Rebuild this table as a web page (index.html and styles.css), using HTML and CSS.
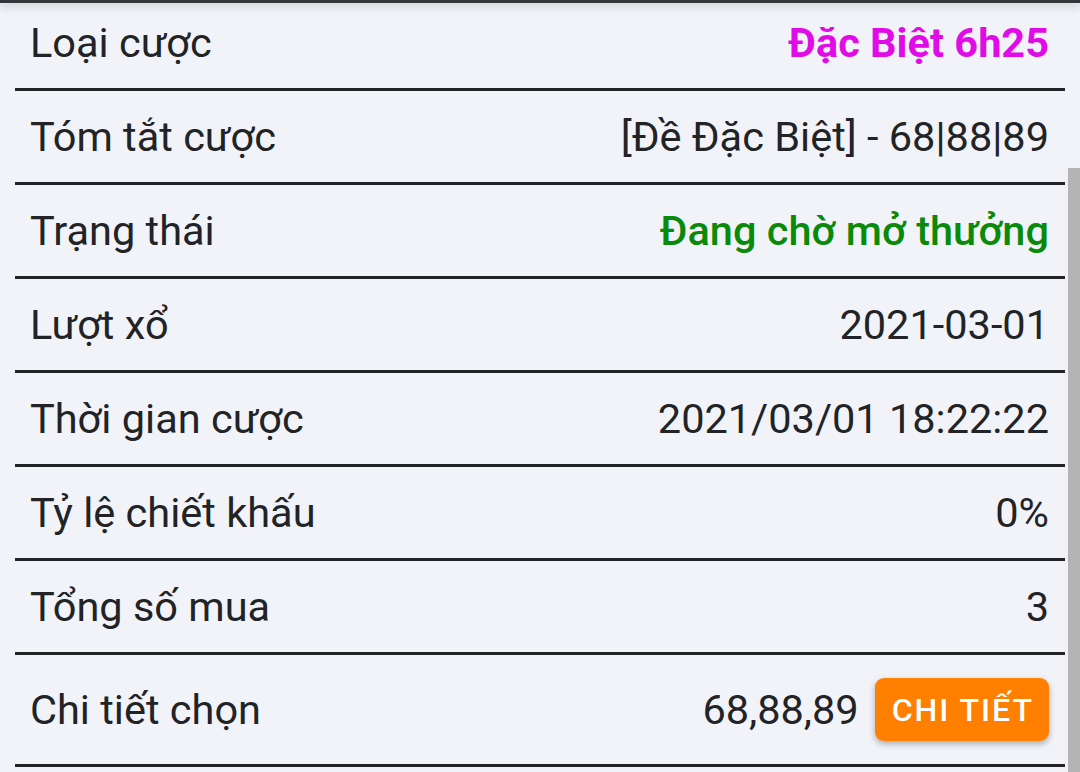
FILE: index.html
```html
<!DOCTYPE html>
<html lang="vi">
<head>
<meta charset="utf-8">
<link rel="stylesheet" href="styles.css">
</head>
<body>
<div class="topbar"></div>
<div class="list">
  <div class="row first"><span class="label">Loại cược</span><span class="value magenta">Đặc Biệt 6h25</span></div>
  <div class="row"><span class="label">Tóm tắt cược</span><span class="value">[Đề Đặc Biệt] - 68|88|89</span></div>
  <div class="row"><span class="label">Trạng thái</span><span class="value green">Đang chờ mở thưởng</span></div>
  <div class="row"><span class="label">Lượt xổ</span><span class="value">2021-03-01</span></div>
  <div class="row"><span class="label">Thời gian cược</span><span class="value">2021/03/01 18:22:22</span></div>
  <div class="row"><span class="label">Tỷ lệ chiết khấu</span><span class="value">0%</span></div>
  <div class="row"><span class="label">Tổng số mua</span><span class="value">3</span></div>
  <div class="row last"><span class="label">Chi tiết chọn</span><span class="value-group"><span class="value">68,88,89</span><button class="btn">CHI TIẾT</button></span></div>
</div>
<div class="scrollbar"></div>
</body>
</html>
```
FILE: styles.css
```css
html, body {
  margin: 0;
  padding: 0;
  background: #f2f3f8;
  overflow: hidden;
  height: 772px;
}
body {
  font-family: Roboto, "Noto Sans", sans-serif;
  color: #212327;
  position: relative;
}
.topbar {
  position: absolute;
  top: 0;
  left: 0;
  right: 0;
  height: 3px;
  background: #33363b;
  box-shadow: 0 2px 10px rgba(0,0,0,0.35);
  z-index: 2;
}
.list {
  padding: 0 15px;
  margin-top: -3px;
}
.row {
  display: flex;
  justify-content: space-between;
  align-items: center;
  height: 91px;
  padding: 0 16px 0 15px;
  border-bottom: 3px solid #222327;
  font-size: 41.5px;
}
.row.last {
  height: 109px;
}
.label {
  white-space: nowrap;
}
.value {
  white-space: nowrap;
}
.magenta {
  color: #e10be8;
  font-weight: 700;
}
.green {
  color: #0a8a0a;
  font-weight: 500;
}
.value-group {
  display: flex;
  align-items: center;
  gap: 16px;
}
.btn {
  font-family: Roboto, sans-serif;
  font-size: 32px;
  font-weight: 500;
  letter-spacing: 2px;
  color: #fff;
  background: #ff7f00;
  border: none;
  border-radius: 9px;
  height: 63px;
  padding: 0 15px 0 17px;
  box-shadow: 0 3px 6px rgba(0,0,0,0.3);
}
.scrollbar {
  position: absolute;
  right: 0;
  top: 168px;
  width: 12px;
  bottom: 0;
  background: #b4b4b4;
}
```
